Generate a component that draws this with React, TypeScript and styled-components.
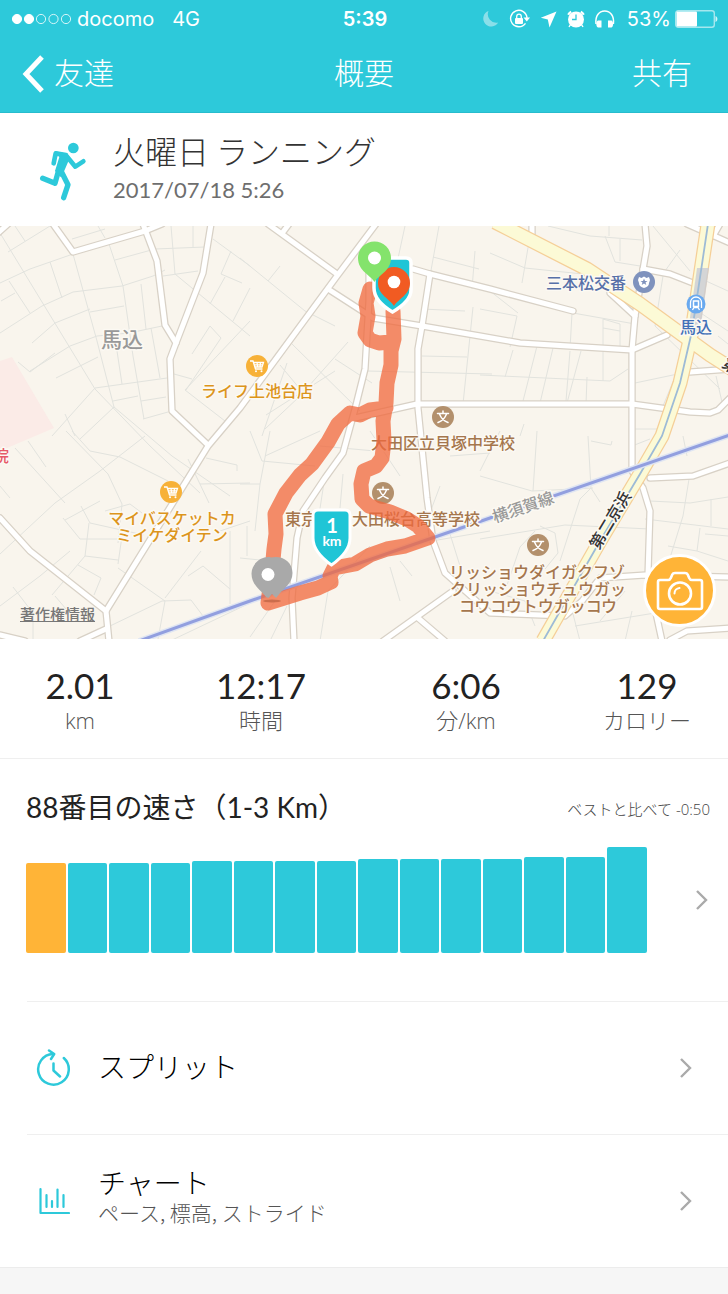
import React from "react";
import styled, { createGlobalStyle } from "styled-components";

const TEAL = "#2dc9da";
const SANS = '"Lato", "Noto Sans CJK JP", sans-serif';
const LIGHT_SANS = '"Open Sans", "Noto Sans CJK JP", sans-serif';
const CJK = '"Noto Sans CJK JP", sans-serif';

const GlobalStyle = createGlobalStyle`
  * { box-sizing: border-box; }
  body { margin: 0; background: #f6f6f6; font-family: ${SANS}; color: #222; }
  button { border: 0; padding: 0; background: none; font: inherit; color: inherit; cursor: pointer; }
  a { color: inherit; text-decoration: none; }
  h1, h2, p, dl, dt, dd { margin: 0; font-weight: inherit; }
  svg { display: block; }
`;

const Screen = styled.div`
  background: #fff;
  border-bottom: 1px solid #ececec;
`;

const Header = styled.header`
  background: ${TEAL};
  color: #fff;
  border-bottom: 1px solid #27bccd;
`;

const StatusBar = styled.div`
  display: grid;
  grid-template-columns: 1fr auto 1fr;
  align-items: center;
  height: 36px;
  padding: 2px 10px 0 12px;
  font-family: Inter, sans-serif;
  font-size: 20px;
`;

const StatusGroup = styled.div<{ $end?: boolean }>`
  display: flex;
  align-items: center;
  justify-content: ${(p) => (p.$end ? "flex-end" : "flex-start")};
  gap: ${(p) => (p.$end ? 4 : 6)}px;
`;

const Clock = styled.time`
  font-weight: 600;
`;

const Network = styled.span`
  margin-left: 12px;
`;

const NavBar = styled.nav`
  display: grid;
  grid-template-columns: 1fr auto 1fr;
  align-items: center;
  height: 76px;
  padding: 0 22px;
  font-family: ${CJK};
  font-size: 30px;
  font-weight: 300;
`;

const NavTitle = styled.h1`
  padding-bottom: 6px;
  font-size: 30px;
`;

const NavButton = styled.button<{ $end?: boolean }>`
  display: flex;
  align-items: center;
  gap: 10px;
  justify-self: ${(p) => (p.$end ? "end" : "start")};
  margin-right: ${(p) => (p.$end ? 14 : 0)}px;
`;

const NavLabel = styled.span`
  padding-bottom: 6px;
`;

const Activity = styled.section`
  display: flex;
  align-items: center;
  gap: 24px;
  height: 113px;
  padding: 4px 0 0 39px;
`;

const ActivityTitle = styled.h2`
  font-family: ${CJK};
  font-size: 32px;
  line-height: 36px;
  font-weight: 300;
  color: #333;
`;

const ActivityDate = styled.p`
  font-size: 22px;
  line-height: 44px;
  color: #6e6e6e;
`;

const MapArea = styled.section`
  position: relative;
  background: #f9f5ed;
`;

const MapDrawing = styled.svg`
  width: 100%;
  height: auto;
`;

const LegalLink = styled.a`
  position: absolute;
  left: 20px;
  bottom: 15px;
  font-family: ${CJK};
  font-size: 15px;
  line-height: 20px;
  font-weight: 500;
  color: #777;
  text-decoration: underline;
`;

const CameraButton = styled.button`
  position: absolute;
  right: 12px;
  bottom: 12px;
  display: grid;
  place-items: center;
  width: 73px;
  height: 73px;
  border: 3px solid #fff;
  border-radius: 50%;
  background: #ffb437;
`;

const Stats = styled.dl`
  display: grid;
  grid-template-columns: 160fr 202fr 208fr 154fr;
  height: 120px;
  padding: 24px 4px 0 0;
  border-bottom: 1px solid #efefef;
  text-align: center;
`;

const Stat = styled.div`
  display: flex;
  flex-direction: column-reverse;
  justify-content: flex-end;
`;

const StatValue = styled.dd`
  font-size: 35px;
  line-height: 44px;
`;

const StatLabel = styled.dt`
  font-family: ${LIGHT_SANS};
  font-size: 22px;
  line-height: 26px;
  font-weight: 300;
  color: #555;
`;

const Ranking = styled.section`
  padding: 26px 18px 0 26px;
  height: 242px;
`;

const RankingHead = styled.div`
  display: flex;
  align-items: center;
  justify-content: space-between;
  height: 44px;
`;

const RankingTitle = styled.h2`
  font-size: 28px;
  line-height: 44px;
`;

const RankingNote = styled.p`
  padding-top: 4px;
  font-family: ${LIGHT_SANS};
  font-size: 15px;
  line-height: 24px;
  font-weight: 300;
  color: #444;
`;

const ChartButton = styled.button`
  display: flex;
  align-items: center;
  justify-content: space-between;
  gap: 48px;
  width: 100%;
  padding: 18px 2px 0 0;
`;

const Bars = styled.span`
  display: flex;
  flex: 1;
  align-items: flex-end;
  gap: 2px;
  height: 106px;
`;

const Bar = styled.span<{ $current: boolean }>`
  flex: 1;
  border-radius: 2px;
  background: ${(p) => (p.$current ? "#ffb437" : TEAL)};
`;

const MenuRow = styled.a`
  display: flex;
  align-items: center;
  height: 133px;
  margin-left: 27px;
  padding-right: 36px;
  border-top: 1px solid #efefef;
`;

const MenuIcon = styled.span`
  width: 71px;
  padding-left: 9px;
`;

const MenuText = styled.span`
  display: flex;
  flex: 1;
  flex-direction: column;
  padding-bottom: 4px;
`;

const MenuTitle = styled.span`
  font-family: ${CJK};
  font-size: 28px;
  line-height: 34px;
  font-weight: 300;
  color: #000;
`;

const MenuNote = styled.span`
  padding-bottom: 8px;
  font-family: ${CJK};
  font-size: 21px;
  line-height: 26px;
  font-weight: 300;
  color: #555;
`;

const Poi = styled.text<{ $start?: boolean }>`
  font-family: ${CJK};
  font-weight: 500;
  font-size: 16px;
  text-anchor: ${(p) => (p.$start ? "start" : "middle")};
  paint-order: stroke;
  stroke: #fcf9f3;
  stroke-width: 3px;
  stroke-linejoin: round;
`;

const District = styled(Poi)`
  font-size: 21px;
`;

const PinText = styled.text`
  font-family: Lato, sans-serif;
  font-weight: 700;
  fill: #fff;
  text-anchor: middle;
`;

const Chevron = () => (
  <svg width="13" height="22" viewBox="0 0 13 22" fill="none" stroke="#aaa" strokeWidth="2.4">
    <path d="M2 2l9 9-9 9" />
  </svg>
);

const SignalDots = () => (
  <svg width="59" height="12" viewBox="0 0 59 12" fill="none" stroke="#fff" aria-label="signal">
    <circle cx="5" cy="6" r="4.6" fill="#fff" />
    <circle cx="17" cy="6" r="4.6" fill="#fff" />
    <circle cx="29" cy="6" r="4.6" strokeWidth=".8" />
    <circle cx="41.5" cy="6" r="4.6" strokeWidth=".8" />
    <circle cx="54" cy="6" r="4.6" strokeWidth=".8" />
  </svg>
);

const StatusIcons = () => (
  <svg width="142" height="20" viewBox="482 8 142 20" fill="none" stroke="#fff" aria-hidden="true">
    <path d="M489.500 10a8 8 0 1 0 9.700 11.500A8.500 8.500 0 0 1 489.500 10z" fill="#8adfe9" stroke="none" />
    <path d="M526.500 22.300a8.200 8.200 0 1 1 1.500-5.300" strokeWidth="1.4" />
    <path d="M524.500 16.500h6.500l-3.200 4z" fill="#fff" stroke="none" />
    <rect x="516" y="17" width="8" height="6" rx="1" fill="#fff" stroke="none" />
    <path d="M517.700 17v-1.500a2.300 2.300 0 0 1 4.600 0V17" strokeWidth="1.3" />
    <path d="M557.500 10.500l-7 16-1.700-8-7-1.700z" fill="#fff" stroke="none" />
    <circle cx="577" cy="18.500" r="8" fill="#fff" stroke="none" />
    <path d="M569.200 13.800a8 8 0 0 1 3-3M584.800 13.800a8 8 0 0 0-3-3" strokeWidth="2.2" />
    <path d="M571.500 23.500l-1.500 2.500M582.500 23.500l1.500 2.500" strokeWidth="1.4" />
    <path d="M577 13.500v5h-4" stroke={TEAL} strokeWidth="1.3" />
    <path d="M597 23c-1-8 3-13 8.700-13s9.700 5 8.700 13" strokeWidth="1.5" />
    <path d="M599 19.500h3.500v7H599c-2.200-1-2.200-6 0-7zM612.500 19.500H609v7h3.500c2.200-1 2.200-6 0-7z" fill="#fff" stroke="none" />
  </svg>
);

const Battery = () => (
  <svg width="43" height="18" viewBox="0 0 43 18" fill="none" aria-hidden="true">
    <rect x=".7" y=".7" width="38.6" height="16.6" rx="2.5" stroke="#a5e7ee" strokeWidth="1.4" />
    <rect x="1.5" y="1.5" width="20.5" height="15" rx="1" fill="#fff" />
    <path d="M40.500 6c2.500 1 2.500 5 0 6z" fill="#d5f4f7" />
  </svg>
);

const Runner = () => (
  <svg width="50" height="61" viewBox="117 420 150 183" fill="none" stroke={TEAL} strokeLinecap="round" strokeLinejoin="round" aria-hidden="true">
    <circle cx="220" cy="441" r="16" fill={TEAL} stroke="none" />
    <path d="M164 450L200 458Q210 462 208 474L191 514L182 528L165 510L178 468Z" fill={TEAL} stroke="none" />
    <path d="M161 487L167 457L198 462M202 468L226 497L250 481" strokeWidth="14" />
    <path d="M176 508L165 547L128 532M182 508L204 551L191 590" strokeWidth="16" />
  </svg>
);

const SplitIcon = () => (
  <svg width="36" height="38" viewBox="0 0 36 38" fill="none" stroke={TEAL} strokeWidth="2.5" strokeLinecap="round" strokeLinejoin="round" aria-hidden="true">
    <path d="M17 5A15.300 15.300 0 1 0 27.800 9" />
    <path d="M13 1.500L18.200 5L15 10M17.500 14.500v7l6.500 6" />
  </svg>
);

const ChartIcon = () => (
  <svg width="34" height="28" viewBox="0 0 34 28" fill="none" stroke={TEAL} strokeWidth="2.2" strokeLinecap="round" strokeLinejoin="round" aria-hidden="true">
    <path d="M4.500 2v24H33M10.500 8v12M16 14v6M21.500 2.500V20M27.500 8v12" />
  </svg>
);

const CameraIcon = () => (
  <svg width="48" height="40" viewBox="0 0 48 40" fill="none" stroke="#fff" strokeWidth="2.6" strokeLinejoin="round" aria-hidden="true">
    <path d="M4 9h8q2 0 2.800-2l1.500-3.500Q17 2 19 2h10q2 0 2.700 1.500L33.200 7Q34 9 36 9h8q2 0 2 2v25q0 2-2 2H4q-2 0-2-2V11q0-2 2-2z" />
    <circle cx="24" cy="22.500" r="11" />
    <path d="M18.500 22.500a5.500 5.500 0 0 1 5-5.500" strokeWidth="2" strokeLinecap="round" />
  </svg>
);

const MINOR_ROADS = [
  "M15 225L25 240M8 251L50 225M0 282L30 268L73 253M9 280L30 312",
  "M0 232L95 388L150 445L200 492M1 300L15 292M0 332L42 305L73 291L122 285L153 275L165 269",
  "M50 261L62 297M98 225L105 237M72 238L105 228M109 243L123 285L133 355L144 418M73 253L97 340L114 406",
  "M115 259L155 248L205 246M171 225L175 273L250 335M163 275L198 270M32 342L55 322L90 308M90 311L124 305",
  "M141 283L146 328M129 332L162 325M30 370L70 345L97 335L129 332M56 377L98 356M18 361L30 371L55 352M117 350L122 383",
  "M151 327L160 377M52 435L95 387L167 377M113 400L138 395M141 400L166 396M143 418L168 411M65 413L75 435",
  "M114 406L172 455L230 495M114 406L80 438M213 238L250 265M231 250L221 273L242 282M225 276L210 303",
  "M250 287L233 320M192 353L210 325L221 337L186 389M185 389L225 420M250 320L185 389M174 373L192 378",
  "M193 225V246M240 257L305 310L335 325M280 265L268 280M348 341L300 395L265 428",
  "M405 225L397 262M433 256L479 268M439 225L430 275M280 364L300 388M335 358L372 382M287 362L262 435M367 370L492 373",
  "M422 355L467 356M473 306L463 403M422 308L465 310M475 250L472 288M291 342L360 410M266 414L335 370",
  "M490 252L525 267L602 275M530 235L522 282M548 225L590 235L642 239M609 225V235M605 235L615 261L640 265M620 238V260",
  "M653 225L690 270M680 249L665 270M663 275L655 325L720 388M573 312L635 323M572 312L570 348M603 318V380M603 318L620 323V347",
  "M603 327L620 330M537 345L523 400M553 347L540 402M570 350L566 400M581 350L567 402M513 349L505 376",
  "M480 374L610 380L628 368M587 376L586 403M490 290L518 312M480 308L517 315L510 346M695 275L728 290M690 305L728 330",
  "M635 382L692 370M675 376L663 405M716 375L722 401M635 428L665 428M728 343L718 335M524 423L520 435",
  "M0 485L10 497M15 447L65 502M28 440L46 466M0 553L55 502L100 470L145 435M66 430L108 473L122 503L118 542",
  "M72 430L90 450L120 456L168 480M65 519L100 500M81 505L90 522L144 534M63 517L80 538H122M89 522L85 555L118 559",
  "M78 564L101 577L94 594M118 563L122 535M52 594L85 555M0 605L40 575L70 550M13 586L33 612M55 595L66 608M33 612V640",
  "M118 567L165 600L158 638M105 510L130 503L142 512M206 457L237 464V470M200 483L250 482M188 458L209 502",
  "M201 550L178 580L165 597M188 575L203 565L230 588M230 530V603M220 530L250 520M110 625L162 600L191 599L203 615M170 640L250 602",
  "M240 483L260 483L270 430M250 430L262 460L315 465M265 455L320 430M260 483L255 530M247 525V555M240 557L270 560",
  "M320 445L375 450M343 473L340 507M325 475L315 540M270 640L287 605M250 636L275 600M320 640L328 590L370 545",
  "M370 430L400 475M440 485L425 525M390 566L400 600M400 560L412 575M432 540L490 530M450 533L460 565M450 455L490 452",
  "M480 538L565 524M506 587L520 546L535 530M540 525L555 532L558 552L545 568M537 430L533 490M588 435L591 487L580 498L560 560",
  "M480 475L532 490L593 487M591 487L600 501M591 440L611 444L612 440M632 445L650 438M500 430L480 470M565 524L650 528",
  "M690 472L683 515L665 573M683 435L687 455M645 518L728 528M650 500L690 502L728 496M711 498V525M700 527L697 550L728 560M728 535L705 533",
  "M697 550L668 545M696 560L693 573M560 620L572 600M573 613L580 640M600 620L625 590M535 625L525 600L490 590M625 640L632 610M575 625L655 612",
];

const MAIN_ROADS = [
  "M53 223L73 251L145 230L162 223",
  "M143 223L157 260L165 324L176 342",
  "M211 223L203 272L176 342L170 358L172 410L208 444",
  "M376 223L337 275L240 407L208 445L106 610L109 640",
  "M268 223L337 273M289 223L283 231",
  "M328 288L373 317L422 325L480 335L520 342L632 349L667 334",
  "M369 250V300L365 368L355 408L343 452L325 477L303 510L297 537L292 597L294 640",
  "M413 268L430 273L490 288L573 310",
  "M430 273L422 325L418 348V407L427 497L433 540L445 572L490 612L565 615L582 600L600 577L645 574L730 576",
  "M355 417L417 403H632L690 411L710 412L718 409L730 397",
  "M645 223L647 245L638 298L635 315L632 349V470L643 487L650 510L648 573L657 617L662 640",
  "M643 268L670 273L693 282M610 285V292L635 315M532 223V235",
  "M690 371L730 368M650 477L693 475L730 462M670 639L687 630L730 627",
  "M687 223L730 242M720 223L713 235M383 640L453 590M418 617L445 640",
  "M0 517L30 550L106 610M106 628L80 640M0 634L25 640M-2 232L8 223",
];

const HIGHWAYS = [
  "M495 221L587 268L640 303L710 354L732 368",
  "M708 223L692 330L680 382L662 435L640 473L600 540L543 640",
];

const RAIL = "M139 640L250 600L490 517L730 434";

const RUN_OUT =
  "M370 288L366 302L368 315L365 332L370 339L379 342L391 341M393 310L394 338L391 350L391 364L387 382L386 402L383 420L384 440L382 457L376 465L364 470L361 483L362 498L369 505L390 511L407 518L418 525L428 537L405 545L387 548L370 554L355 563L334 567L330 575L331 581L318 587L300 592L268 602L272 570L274 548L276 533L275 513L286 492L300 474L312 463L328 441L338 423L350 412L360 414L370 409L386 407";

const SchoolMark = ({ x, y }: { x: number; y: number }) => (
  <g transform={`translate(${x} ${y})`} fill="none" stroke="#fff" strokeWidth="1.5" strokeLinecap="round">
    <circle r="11" fill="#b3906c" stroke="none" />
    <path d="M0-6v2.500M-5.500-3.500h11M-3.500-3C-2 1 2 4.500 5 5.500M3.500-3C2 1-2 4.500-5 5.500" />
  </g>
);

const CartMark = ({ x, y }: { x: number; y: number }) => (
  <g transform={`translate(${x} ${y})`} fill="none" stroke="#fff" strokeWidth="1.3">
    <circle r="11" fill="#f7b138" stroke="none" />
    <path d="M-7-5h3l2.500 8h7M-3.500-3.500h10L5 1H-2zM-2.500-1.200h8.500M0-3.500l.7 4.500M3.500-3.500L3 1" />
    <circle cx="-1" cy="5.3" r="1" fill="#fff" stroke="none" />
    <circle cx="4.5" cy="5.3" r="1" fill="#fff" stroke="none" />
  </g>
);

const RouteMap = () => (
  <MapDrawing viewBox="0 225 728 413" role="img" aria-label="ルート">
    <path d="M0 360L12 356L54 427L0 450z" fill="#fbebe7" />
    <g fill="none" stroke="#e2e3de" strokeWidth="1">
      {MINOR_ROADS.map((d) => <path key={d} d={d} />)}
    </g>
    <g fill="none" stroke="#d8d1c6" strokeWidth="7.5" strokeLinejoin="round" strokeLinecap="round">
      {MAIN_ROADS.map((d) => <path key={d} d={d} />)}
    </g>
    <g fill="none" stroke="#fff" strokeWidth="5" strokeLinejoin="round" strokeLinecap="round">
      {MAIN_ROADS.map((d) => <path key={d} d={d} />)}
    </g>
    <g fill="none" stroke="#f5cf98" strokeWidth="15" strokeLinejoin="round">
      {HIGHWAYS.map((d) => <path key={d} d={d} />)}
    </g>
    <g fill="none" stroke="#fcfad6" strokeWidth="12.5" strokeLinejoin="round">
      {HIGHWAYS.map((d) => <path key={d} d={d} />)}
    </g>
    <path d="M697 267h12l-9 64h-12z" fill="#c9ccd6" opacity=".8" />
    <path d={HIGHWAYS[1]} fill="none" stroke="#9dbbd6" strokeWidth="1.8" />
    <path d={RAIL} fill="none" stroke="#dfe5f2" strokeWidth="6" />
    <path d={RAIL} fill="none" stroke="#929fdf" strokeWidth="3" />

    <District x="122" y="346" fill="#999">馬込</District>
    <Poi x="257" y="396" fill="#dc951c">ライフ上池台店</Poi>
    <Poi x="172" y="523" fill="#dc951c">マイバスケットカ</Poi>
    <Poi x="172" y="540" fill="#dc951c">ミイケダイテン</Poi>
    <Poi x="586" y="288" fill="#5770a8">三本松交番</Poi>
    <Poi x="696" y="332" fill="#4270b8">馬込</Poi>
    <Poi x="443" y="448" fill="#a5764d">大田区立貝塚中学校</Poi>
    <Poi x="285" y="524" fill="#a5764d" $start>東京</Poi>
    <Poi x="352" y="524" fill="#a5764d" $start>大田桜台高等学校</Poi>
    <Poi x="537" y="577" fill="#a5764d">リッショウダイガクフゾ</Poi>
    <Poi x="538" y="594" fill="#a5764d">クリッショウチュウガッ</Poi>
    <Poi x="538" y="611" fill="#a5764d">コウコウトウガッコウ</Poi>
    <Poi x="1" y="461" fill="#e65a68">院</Poi>
    <Poi x="523" y="512" fill="#999" transform="rotate(-19 523 506)">横須賀線</Poi>
    <Poi x="610" y="525" fill="#333" transform="rotate(-59 610 519)">第二京浜</Poi>
    <Poi x="731" y="371" fill="#333" transform="rotate(35 731 365)">第</Poi>

    <SchoolMark x={443} y={416} />
    <SchoolMark x={383} y={492} />
    <SchoolMark x={538} y={544} />
    <CartMark x={257} y={365} />
    <CartMark x={171} y={491} />
    <circle cx="644" cy="281" r="11" fill="#7f92bd" />
    <path d="M639 276l2.500 1 2.500-1.500 2.500 1.500 2.500-1 1 3-1 3c0 3-2 4-5 5-3-1-5-2-5-5l-1-3z" fill="#fff" />
    <path d="M644 277.500l1 2.500h2.500l-2 1.500.8 2.500-2.300-1.500-2.300 1.500.8-2.500-2-1.500h2.500z" fill="#7f92bd" />
    <circle cx="696" cy="303" r="9.5" fill="#69a9ef" />
    <path d="M690.500 307v-5.500a5.500 5.500 0 0 1 11 0v5.500M692.500 309l1.500-2.500h4l1.500 2.500" fill="none" stroke="#fff" strokeWidth="1.3" />
    <path d="M693.500 300h5v5.500h-5z" fill="none" stroke="#fff" strokeWidth="1.5" />

    <path d={RUN_OUT} fill="none" stroke="#f1693e" strokeWidth="15" strokeLinejoin="round" strokeLinecap="round" opacity=".76" />

    <ellipse cx="272" cy="600" rx="9" ry="1.5" fill="#a5502f" opacity=".5" />
    <path d="M271 556.500c-7-2-19 4-19.500 16 0 12 10 17 14.500 23.500l2.500 1 3.500-4 4 4 2.500-3c5-7 14-11 14-22 0-12-11-18-21.500-15.500z" fill="#a9a9a9" />
    <circle cx="268" cy="573.5" r="6.5" fill="#fff" />

    <path d="M376 257h30q5 0 5 5v27q0 11-18.500 22Q374 300 374 287V262z" fill="#1fc5d6" stroke="#fff" strokeWidth="3.5" />
    <path d="M394 305c-4-7-16-11-16-23a16 16 0 0 1 32 0c0 12-12 16-16 23z" fill="#f15b22" />
    <circle cx="394" cy="281" r="6.3" fill="#fff" />
    <path d="M374.500 281c-4-7-16.500-11-16.500-24a16.500 16.500 0 0 1 33 0c0 13-12.500 17-16.500 24z" fill="#84e36c" />
    <circle cx="374.5" cy="257" r="6.5" fill="#fff" />

    <path d="M318 509h27q5 0 5 5v23q0 14-18.500 27Q313 551 313 537v-23q0-5 5-5z" fill="#1fc5d6" stroke="#fff" strokeWidth="3" />
    <PinText x="332" y="532" fontSize="20">1</PinText>
    <PinText x="332" y="545" fontSize="14">km</PinText>
  </MapDrawing>
);

const STATS = [
  { value: "2.01", label: "km" },
  { value: "12:17", label: "時間" },
  { value: "6:06", label: "分/km" },
  { value: "129", label: "カロリー" },
];

const BAR_HEIGHTS = [90, 90, 90, 90, 92, 92, 92, 92, 94, 94, 94, 94, 96, 96, 106];

export default function App() {
  return (
    <>
      <GlobalStyle />
      <Screen>
        <Header>
          <StatusBar>
            <StatusGroup>
              <SignalDots />
              <span>docomo</span>
              <Network>4G</Network>
            </StatusGroup>
            <Clock>5:39</Clock>
            <StatusGroup $end>
              <StatusIcons />
              <span>53%</span>
              <Battery />
            </StatusGroup>
          </StatusBar>
          <NavBar>
            <NavButton type="button">
              <svg width="22" height="38" viewBox="0 0 22 38" fill="none" stroke="#fff" strokeWidth="5" aria-hidden="true">
                <path d="M20 2L4 19l16 17" />
              </svg>
              <NavLabel>友達</NavLabel>
            </NavButton>
            <NavTitle>概要</NavTitle>
            <NavButton type="button" $end>
              <NavLabel>共有</NavLabel>
            </NavButton>
          </NavBar>
        </Header>

        <Activity>
          <Runner />
          <div>
            <ActivityTitle>火曜日 ランニング</ActivityTitle>
            <ActivityDate>2017/07/18 5:26</ActivityDate>
          </div>
        </Activity>

        <MapArea>
          <RouteMap />
          <LegalLink href="#legal">著作権情報</LegalLink>
          <CameraButton type="button" aria-label="写真を撮る">
            <CameraIcon />
          </CameraButton>
        </MapArea>

        <Stats>
          {STATS.map((s) => (
            <Stat key={s.label}>
              <StatLabel>{s.label}</StatLabel>
              <StatValue>{s.value}</StatValue>
            </Stat>
          ))}
        </Stats>

        <Ranking>
          <RankingHead>
            <RankingTitle>88番目の速さ（1-3 Km）</RankingTitle>
            <RankingNote>ベストと比べて -0:50</RankingNote>
          </RankingHead>
          <ChartButton type="button" aria-label="ランキングを見る">
            <Bars>
              {BAR_HEIGHTS.map((height, i) => (
                <Bar key={i} $current={i === 0} style={{ height }} />
              ))}
            </Bars>
            <Chevron />
          </ChartButton>
        </Ranking>

        <MenuRow href="#splits">
          <MenuIcon><SplitIcon /></MenuIcon>
          <MenuText>
            <MenuTitle>スプリット</MenuTitle>
          </MenuText>
          <Chevron />
        </MenuRow>
        <MenuRow href="#charts">
          <MenuIcon><ChartIcon /></MenuIcon>
          <MenuText>
            <MenuTitle>チャート</MenuTitle>
            <MenuNote>ペース, 標高, ストライド</MenuNote>
          </MenuText>
          <Chevron />
        </MenuRow>
      </Screen>
    </>
  );
}
